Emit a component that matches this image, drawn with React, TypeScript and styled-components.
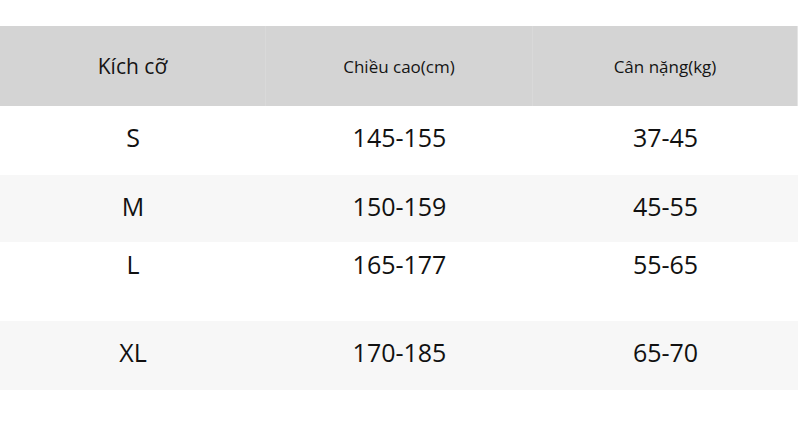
import React from "react";
import styled, { createGlobalStyle } from "styled-components";

const Global = createGlobalStyle`
  html, body { margin: 0; padding: 0; background: #ffffff; }
  body { font-family: "Open Sans", "Noto Sans", sans-serif; color: #111111; }
`;

const Table = styled.div`
  margin-top: 26px;
  width: 798px;
  display: flex;
  flex-direction: column;
`;

const HeaderRow = styled.div`
  display: grid;
  grid-template-columns: 266px 267px 265px;
  height: 80px;
  background: #d4d4d4;
`;

const HeaderCell = styled.div<{ $big?: boolean; $last?: boolean }>`
  display: flex;
  align-items: center;
  justify-content: center;
  font-size: ${(p) => (p.$big ? "21px" : "17px")};
  color: #141414;
  border-right: 1px solid ${(p) => (p.$last ? "#e4e4e4" : "#d9d9d9")};
`;

const Row = styled.div<{ $h: number; $pad: number; $alt?: boolean }>`
  display: grid;
  grid-template-columns: 266px 267px 265px;
  height: ${(p) => p.$h}px;
  background: ${(p) => (p.$alt ? "#f7f7f7" : "#ffffff")};
  box-sizing: border-box;
  padding-top: ${(p) => p.$pad}px;
`;

const Cell = styled.div`
  display: flex;
  justify-content: center;
  align-items: flex-start;
  font-size: 25px;
  line-height: 34px;
  color: #111111;
`;

const rows = [
  { size: "S", h: "145-155", w: "37-45", height: 69, pad: 14, alt: false },
  { size: "M", h: "150-159", w: "45-55", height: 67, pad: 14, alt: true },
  { size: "L", h: "165-177", w: "55-65", height: 79, pad: 5, alt: false },
  { size: "XL", h: "170-185", w: "65-70", height: 69, pad: 14, alt: true },
];

export default function App() {
  return (
    <>
      <Global />
      <Table>
        <HeaderRow>
          <HeaderCell $big>Kích cỡ</HeaderCell>
          <HeaderCell>Chiều cao(cm)</HeaderCell>
          <HeaderCell $last>Cân nặng(kg)</HeaderCell>
        </HeaderRow>
        {rows.map((r) => (
          <Row key={r.size} $h={r.height} $pad={r.pad} $alt={r.alt}>
            <Cell>{r.size}</Cell>
            <Cell>{r.h}</Cell>
            <Cell>{r.w}</Cell>
          </Row>
        ))}
      </Table>
    </>
  );
}
